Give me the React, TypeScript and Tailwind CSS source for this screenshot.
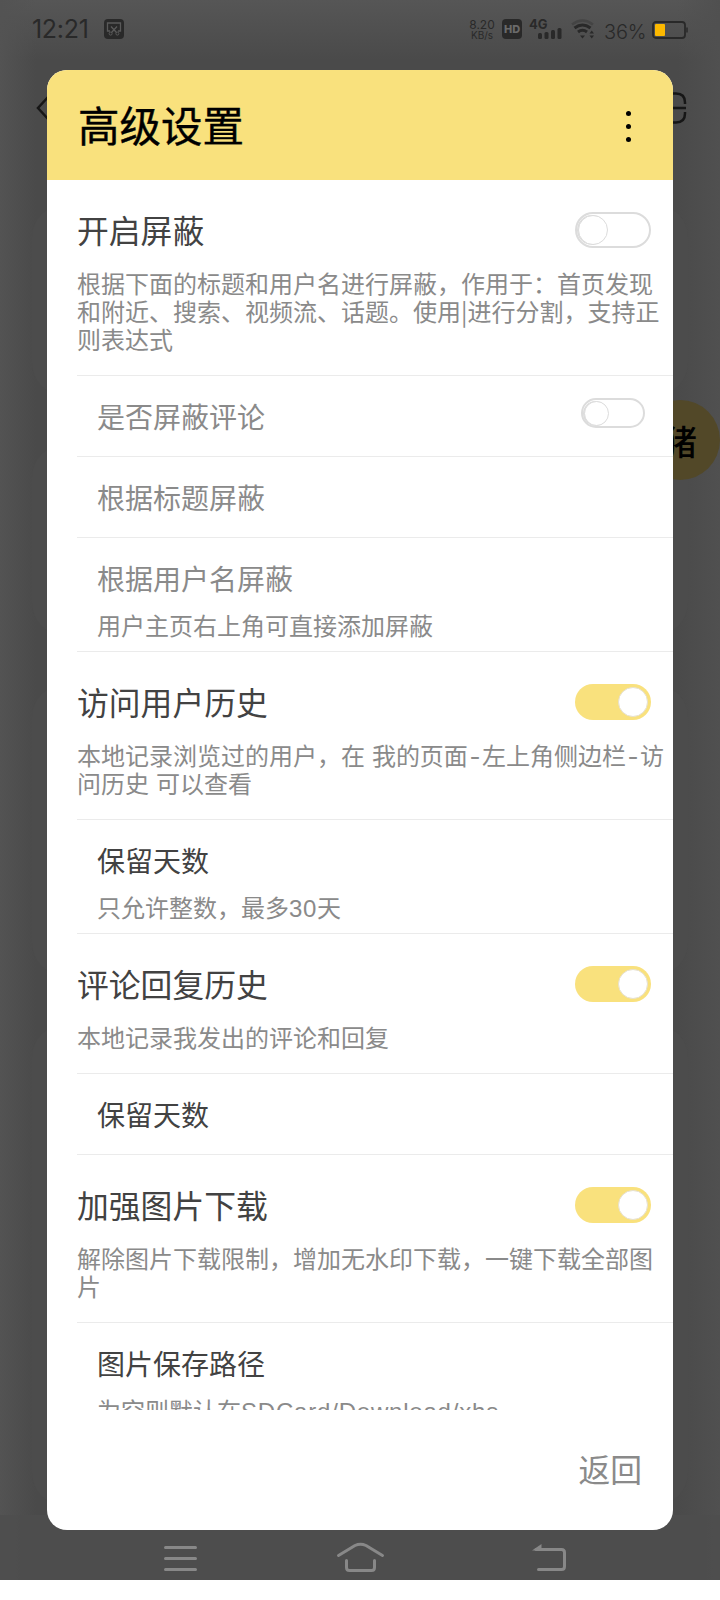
const FONT = "font-['Noto_Sans_CJK_SC',sans-serif]";

function Toggle({ on, small }: { on?: boolean; small?: boolean }) {
  if (on) {
    return (
      <div className="flex h-9 w-[76px] items-center justify-end rounded-full bg-[#f9e17d] pr-[3px]">
        <div className="size-[30px] rounded-full border border-[#e6e0cf] bg-white" />
      </div>
    );
  }
  return (
    <div
      className={
        small
          ? "flex h-[30px] w-16 items-center rounded-full border-2 border-[#dcdcdc] pl-px"
          : "flex h-9 w-[76px] items-center rounded-full border-2 border-[#dcdcdc] pl-px"
      }
    >
      <div
        className={
          small
            ? "size-[25px] rounded-full border border-[#dcdcdc] bg-white shadow-[-1px_0_0_#dcdcdc]"
            : "size-[30px] rounded-full border border-[#dcdcdc] bg-white shadow-[-1px_0_0_#dcdcdc]"
        }
      />
    </div>
  );
}

function Section({
  title,
  lines,
  on,
  className,
}: {
  title: string;
  lines: React.ReactNode[];
  on?: boolean;
  className: string;
}) {
  return (
    <div className={`border-b border-[#ebebeb] pt-8 ${className}`}>
      <div className="flex h-9 items-center justify-between pr-[22px]">
        <h2 className="-mt-0.5 text-[31.8px] leading-9 text-[#424242]">
          {title}
        </h2>
        <Toggle on={on} />
      </div>
      <div className="pt-[21px] text-2xl leading-7 whitespace-nowrap text-[#8a8a8a]">
        {lines.map((line, i) => (
          <p key={i} className="h-7">
            {line}
          </p>
        ))}
      </div>
    </div>
  );
}

function Item({
  title,
  note,
  muted,
  toggle,
  className,
}: {
  title: string;
  note?: React.ReactNode;
  muted?: boolean;
  toggle?: boolean;
  className: string;
}) {
  return (
    <div className={`border-b border-[#ebebeb] pt-5 pl-5 ${className}`}>
      <div className="flex h-10 items-center justify-between pr-7">
        <h3
          className={
            muted
              ? "text-[28px] leading-10 text-[#8a8a8a]"
              : "text-[28px] leading-10 text-[#424242]"
          }
        >
          {title}
        </h3>
        {toggle && (
          <div className="-mt-1.5">
            <Toggle small />
          </div>
        )}
      </div>
      {note && (
        <p className="pt-[13px] text-2xl leading-7 whitespace-nowrap text-[#8a8a8a]">
          {note}
        </p>
      )}
    </div>
  );
}

function Dash() {
  return <span className="px-[1.5px] font-[Inter] leading-none">-</span>;
}

function StatusBar() {
  return (
    <div className="relative flex h-[58px] items-start justify-between pr-8 pl-8 text-[#292929]">
      <div className="flex items-start pt-[15px]">
        <span className="w-[72px] font-[Inter] text-[25px] leading-7 tracking-[-0.3px]">
          12:21
        </span>
        <svg className="mt-1" width="20" height="20" viewBox="0 0 20 20">
          <rect width="20" height="20" rx="4" fill="#292929" />
          <path
            d="M6 12H3.500V4h13v8H14M7 7.500l5.500 6M13 7.500l-5.500 6"
            fill="none"
            stroke="#5a5a5a"
            strokeWidth="1.3"
          />
          <circle cx="6.600" cy="14.600" r="1.500" fill="none" stroke="#5a5a5a" />
          <circle cx="13.400" cy="14.600" r="1.500" fill="none" stroke="#5a5a5a" />
        </svg>
      </div>
      <div className="flex items-start pt-[19px]">
        <div className="-ml-px w-[26px] text-center font-[Inter] text-[12px] leading-[11px]">
          <div>8.20</div>
          <div className="text-[10px] leading-[10px] whitespace-nowrap">
            KB/s
          </div>
        </div>
        <div className="ml-[7px] flex size-5 items-center justify-center rounded bg-[#292929] font-[Inter] text-[11px] font-extrabold text-[#6a6a6a]">
          HD
        </div>
        <svg
          className="ml-2 overflow-visible"
          width="32"
          height="20"
          viewBox="0 0 32 20"
          fill="#292929"
        >
          <text x="-1" y="10" className="font-[Inter] text-[13px] font-bold">
            4G
          </text>
          <rect x="8" y="14" width="4" height="6" rx="1.5" />
          <rect x="14.500" y="13" width="4" height="7" rx="1.5" />
          <rect x="21" y="11" width="4" height="9" rx="1.5" />
          <rect x="27.500" y="9" width="4" height="11" rx="1.500" />
        </svg>
        <svg
          className="ml-[9px] overflow-visible"
          width="24"
          height="20"
          viewBox="0 0 24 20"
          fill="none"
        >
          <path d="M1 5.500Q11.500-2.500 22 5.500" stroke="#444" strokeWidth="2.500" />
          <path
            d="M3.500 9Q11.500 3 19.500 9M7 13Q11.500 9.500 16 13"
            stroke="#292929"
            strokeWidth="3"
          />
          <path
            d="M9 16.500h5l-2.500 3zM18.500 14.500h4.500l-2.250-3zM18.500 16.500h4.500l-2.250 3z"
            fill="#292929"
          />
        </svg>
        <span className="mt-px ml-[9px] w-[41px] font-[Inter] text-[20px] leading-6 font-light tracking-[-0.2px]">
          36%
        </span>
        <svg
          className="mt-0.5 ml-[7px]"
          width="36"
          height="18"
          viewBox="0 0 36 18"
        >
          <rect
            x="1"
            y="1"
            width="32"
            height="16"
            rx="3"
            fill="none"
            stroke="#292929"
            strokeWidth="1.800"
          />
          <rect x="3" y="3" width="10" height="12" rx="1" fill="#fdb900" />
          <path d="M35 6.500v5" stroke="#292929" strokeWidth="1.500" />
        </svg>
      </div>
    </div>
  );
}

function NavBar() {
  return (
    <svg
      className="absolute bottom-0 left-0"
      width="720"
      height="50"
      viewBox="0 0 720 50"
      fill="none"
      stroke="#888"
      strokeWidth="3"
      strokeLinecap="round"
      strokeLinejoin="round"
    >
      <path d="M165.500 17.500h30M165.500 28.500h30M165.500 39.500h30" />
      <path d="M338.500 25.500 355 15.500q5.500-2.500 11 0l16.500 10" />
      <path d="M346.500 30.500v7q0 3 3 3h22q3 0 3-3v-7" />
      <path d="M538.500 39.500h23q3 0 3-3v-14q0-3-3-3H536" />
      <path d="M532 20.500l9.500-6.500v6.500z" fill="#888" stroke="none" />
    </svg>
  );
}

export default function App() {
  return (
    <div className="h-[1600px] w-[720px] bg-white">
      <div
        className={`relative h-[1580px] overflow-hidden bg-[#4a4a4a] bg-[linear-gradient(to_right,#535353,#4a4a4a00_5%,#4a4a4a00_94%,#505050),linear-gradient(to_bottom,#565656,#4a4a4a00_60px)] ${FONT}`}
      >
        <div className="absolute inset-x-8 top-[205px] flex flex-col gap-[50px]">
          <div className="h-[190px] rounded-[32px] bg-[#4c4c4c]" />
          <div className="h-[190px] rounded-[32px] bg-[#4c4c4c]" />
          <div className="h-[290px] rounded-[32px] bg-[#4c4c4c]" />
          <div className="h-[480px] rounded-[32px] bg-[#4c4c4c]" />
        </div>
        <div className="absolute inset-x-0 bottom-0 h-[65px] bg-[#4d4d4d]/80" />

        <StatusBar />

        <svg
          className="absolute top-[90px] left-9"
          width="14"
          height="36"
          fill="none"
          stroke="#161616"
          strokeWidth="2.500"
        >
          <path d="M12.500 6.500 2 18l10.500 11.500" />
        </svg>
        <svg
          className="absolute top-[90px] left-[670px]"
          width="18"
          height="36"
          fill="none"
          stroke="#161616"
          strokeWidth="2.500"
        >
          <path d="M0 3.500h6q9 0 9 9v1.500M0 18h16M0 32.500h6q9 0 9-9v-1.500" />
        </svg>
        <div className="absolute top-[400px] left-[640px] flex size-20 items-center justify-end rounded-full bg-[#524828] pr-[23px] text-[34px] font-medium text-black">
          猪
        </div>

        <div className="relative mx-auto mt-3 flex h-[1460px] w-[626px] flex-col overflow-hidden rounded-[20px] bg-white">
          <header className="flex h-[110px] shrink-0 items-center justify-between bg-[#f9e17d] pr-[42px] pl-[31px]">
            <h1 className="-mt-0.5 text-[41.5px] text-black [-webkit-text-stroke:0.4px_#000]">
              高级设置
            </h1>
            <div className="mt-0.5 flex flex-col gap-2">
              <i className="size-[5px] rounded-full bg-black" />
              <i className="size-[5px] rounded-full bg-black" />
              <i className="size-[5px] rounded-full bg-black" />
            </div>
          </header>

          <main className="h-[1230px] shrink-0 overflow-hidden pl-[30px]">
            <Section
              title="开启屏蔽"
              className="h-[196px]"
              lines={[
                "根据下面的标题和用户名进行屏蔽，作用于：首页发现",
                "和附近、搜索、视频流、话题。使用|进行分割，支持正",
                "则表达式",
              ]}
            />
            <Item title="是否屏蔽评论" muted toggle className="h-[81px]" />
            <Item title="根据标题屏蔽" muted className="h-[81px]" />
            <Item
              title="根据用户名屏蔽"
              note="用户主页右上角可直接添加屏蔽"
              muted
              className="h-[114px]"
            />
            <Section
              title="访问用户历史"
              on
              className="h-[168px] [word-spacing:1.5px]"
              lines={[
                <>
                  本地记录浏览过的用户，在 我的页面
                  <Dash />
                  左上角侧边栏
                  <Dash />访
                </>,
                "问历史 可以查看",
              ]}
            />
            <Item
              title="保留天数"
              note={
                <>
                  只允许整数，最多
                  <span className="font-['Liberation_Sans'] leading-none tracking-[0.6px]">
                    30
                  </span>
                  天
                </>
              }
              className="h-[114px]"
            />
            <Section
              title="评论回复历史"
              on
              className="h-[140px]"
              lines={["本地记录我发出的评论和回复"]}
            />
            <Item title="保留天数" className="h-[81px]" />
            <Section
              title="加强图片下载"
              on
              className="h-[168px]"
              lines={[
                "解除图片下载限制，增加无水印下载，一键下载全部图",
                "片",
              ]}
            />
            <Item
              title="图片保存路径"
              note={
                <>
                  为空则默认在
                  <span className="font-['Liberation_Sans'] leading-none tracking-[0.8px]">
                    SDCard/Download/xhs
                  </span>
                </>
              }
              className="h-[114px]"
            />
          </main>

          <footer className="flex flex-1 items-center justify-end pr-[31px]">
            <button className="-mt-0.5 text-[31.8px] text-[#8a8a8a]">
              返回
            </button>
          </footer>
        </div>

        <NavBar />
      </div>
    </div>
  );
}
